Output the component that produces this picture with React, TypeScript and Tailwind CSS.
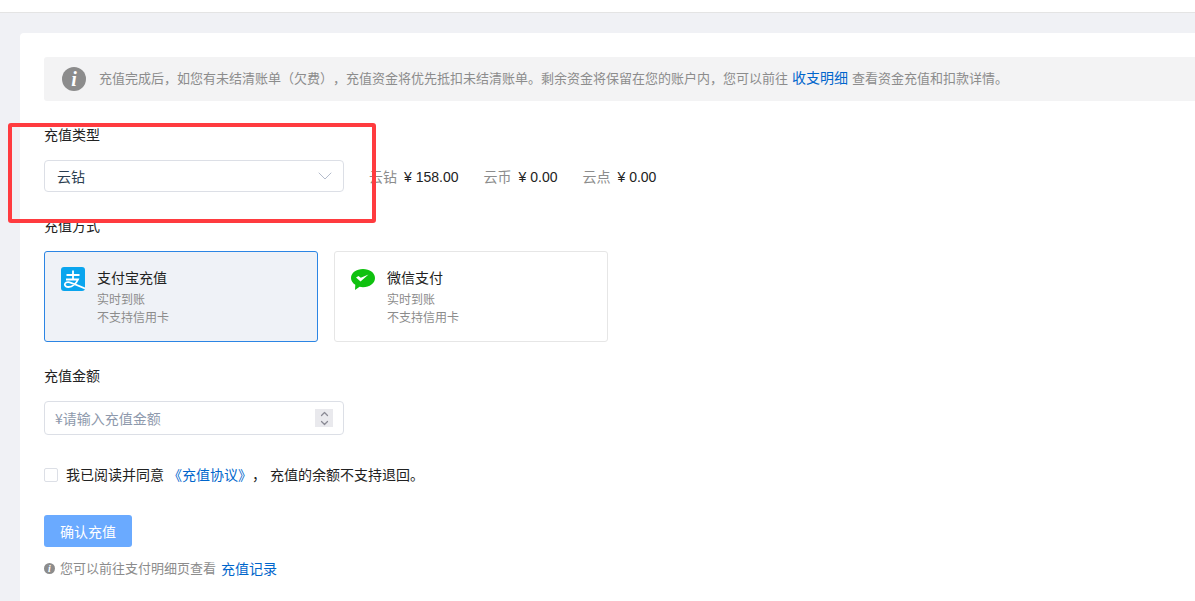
import React from 'react';
import { ChevronDown, ChevronUp } from 'lucide-react';

const fontStack = { fontFamily: '"Noto Sans CJK SC", "Liberation Sans", sans-serif' };

const AlipayIcon = () => (
  <svg width="24" height="24" viewBox="0 0 24 24" className="shrink-0">
    <rect width="24" height="24" rx="3" fill="#0aa5ee" />
    <path d="M5.500 8h13M12 3.500v9M5 12.500h12c-1.500 3.500-5.500 7.500-9.500 7.500-2.500 0-3.700-1.200-3.700-2.500 0-1.800 2.200-2.800 4.700-2.200 3 .7 7 2.400 15.500 6.200" fill="none" stroke="#fff" strokeWidth="1.800" />
  </svg>
);

const WechatIcon = () => (
  <svg width="24" height="21" viewBox="0 0 24 21" className="shrink-0">
    <path d="M12 0C5.400 0 0 3.800 0 9c0 2.800 1.700 5.200 4.300 6.800L4 21l4.600-3.200c1.100.3 2.200.4 3.400.4 6.600 0 12-4 12-9.200C24 3.800 18.600 0 12 0z" fill="#0fc10f" />
    <path d="M5 8.500L7.500 7l2.300 1.800 7.700-3.300-8 7z" fill="#fff" />
  </svg>
);

const InfoIcon = ({ size, text }: { size: number; text: string }) => (
  <span
    className={`flex shrink-0 items-center justify-center rounded-full bg-[#8c8c8c] font-bold italic text-white ${text}`}
    style={{ width: size, height: size, fontFamily: '"Liberation Serif", serif' }}
  >
    i
  </span>
);

const PayCard = ({ active, icon, title }: { active?: boolean; icon: React.ReactNode; title: string }) => (
  <div
    className={`flex h-[91px] w-[274px] rounded-[3px] border pl-4 pt-[13px] ${
      active ? 'border-[#2b85e4] bg-[#eff2f7]' : 'border-[#e6e6e6] bg-white'
    }`}
  >
    <div className="flex h-[28px] w-[36px] items-center">{icon}</div>
    <div className="-mt-[2px]">
      <p className="text-[14px] leading-[28px] text-[#222]">{title}</p>
      <p className="-mt-[1px] text-[12px] leading-[18px] text-[#8c8c8c]">实时到账</p>
      <p className="text-[12px] leading-[18px] text-[#8c8c8c]">不支持信用卡</p>
    </div>
  </div>
);

const Balance = ({ name, value }: { name: string; value: string }) => (
  <span className="flex items-center text-[14px] text-[#222]">
    <span className="mr-[7px] text-[#8c8c8c]">{name}</span>
    <span className="mt-[1px]" style={{ fontFamily: '"Liberation Sans", sans-serif' }}>
      ¥&nbsp;{value}
    </span>
  </span>
);

export default function App() {
  return (
    <div className="relative h-[601px] w-[1195px] overflow-hidden bg-[#f0f1f5] [text-spacing-trim:space-all]" style={fontStack}>
      <div className="h-[13px] border-b border-[#e4e4e4] bg-white" />

      <div className="ml-5 mt-5 h-[600px] rounded-l-[4px] bg-white pl-6 pt-6">
        {/* notice */}
        <div className="flex h-[44px] items-center rounded-l-[3px] bg-[#f3f3f4] pl-[18px] text-[13px] text-[#8c8c8c]">
          <InfoIcon size={24} text="text-[20px]" />
          <div className="mb-[3px] ml-[13px] flex items-center">
            <span>充值完成后，如您有未结清账单（欠费），充值资金将优先抵扣未结清账单。剩余资金将保留在您的账户内，您可以前往</span>
            <a className="mx-[4px] text-[14px] text-[#0066cc]">收支明细</a>
            <span>查看资金充值和扣款详情。</span>
          </div>
        </div>

        {/* type */}
        <p className="mt-[23px] text-[14px] leading-[20px] text-[#222]">充值类型</p>
        <div className="mt-[16px] flex items-center">
          <div className="flex h-[32px] w-[300px] items-center justify-between rounded-[4px] border border-[#dcdfe6] pl-3 pr-[6px] text-[14px] text-[#2c3e50]">
            <span>云钻</span>
            <ChevronDown size={24} strokeWidth={1} className="text-[#b4bccc]" />
          </div>
          <div className="ml-[25px] mt-[1px] flex gap-[25px]">
            <Balance name="云钻" value="158.00" />
            <Balance name="云币" value="0.00" />
            <Balance name="云点" value="0.00" />
          </div>
        </div>

        {/* method */}
        <p className="mt-[23px] text-[14px] leading-[20px] text-[#222]">充值方式</p>
        <div className="mt-[16px] flex gap-4">
          <PayCard active icon={<AlipayIcon />} title="支付宝充值" />
          <PayCard icon={<WechatIcon />} title="微信支付" />
        </div>

        {/* amount */}
        <p className="mt-[23px] text-[14px] leading-[20px] text-[#222]">充值金额</p>
        <div className="mt-[16px] flex h-[34px] w-[300px] items-center justify-between rounded-[4px] border border-[#dcdfe6] pl-[10px] pr-[10px] text-[14px] text-[#8e99ac]">
          <span>¥请输入充值金额</span>
          <span className="flex h-[18px] w-[18px] flex-col items-center justify-center bg-[#e9e9ed] text-[#8a8a94]">
            <ChevronUp size={13} strokeWidth={2.5} className="-my-[1.5px]" />
            <ChevronDown size={13} strokeWidth={2.5} className="-my-[1.5px]" />
          </span>
        </div>

        {/* agreement */}
        <div className="mt-[29px] flex h-[20px] items-center text-[14px] text-[#222]">
          <span className="mt-[2px] h-[14px] w-[14px] rounded-[2px] border border-[#dcdfe6] bg-white" />
          <span className="ml-2">我已阅读并同意</span>
          <a className="ml-[4px] text-[#0066cc]">《充值协议》</a>
          <span>，</span>
          <span className="ml-[4px]">充值的余额不支持退回。</span>
        </div>

        <button className="mt-[31px] block h-[32px] w-[88px] rounded-[3px] bg-[#6aaaff] text-[14px] text-white">确认充值</button>

        <div className="mt-[11px] flex h-[20px] items-center text-[13px] text-[#8c8c8c]">
          <InfoIcon size={11} text="text-[10px]" />
          <span className="ml-[5px]">您可以前往支付明细页查看</span>
          <a className="ml-[5px] text-[14px] text-[#0066cc]">充值记录</a>
        </div>
      </div>

      {/* annotation drawn over the screenshot */}
      <div className="absolute left-[8px] top-[123px] h-[100px] w-[368px] rounded-[3px] border-4 border-[#ff3b3f]" />
    </div>
  );
}
